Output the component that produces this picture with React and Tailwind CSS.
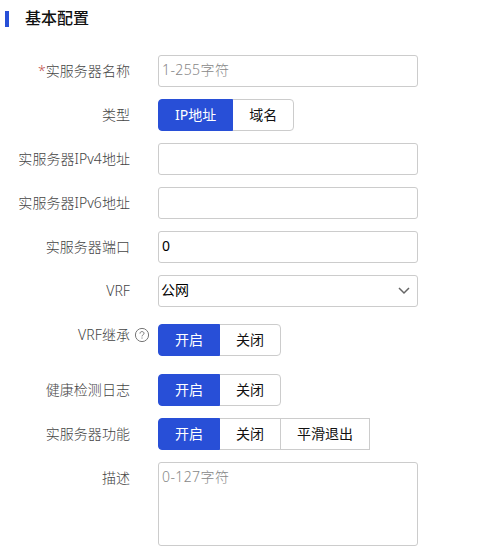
import React, { useState } from 'react';

const inputStyle = 'block w-[260px] h-8 rounded-[3px] border border-[#ccc] bg-white pl-[3px] pr-2 pb-[3px] text-sm text-black placeholder:text-[#888] placeholder:tracking-[0.4px] outline-none focus:border-[#284fd7]';

function Row({ label, required, help, className = 'mb-3', children }) {
  return (
    <div className={`flex items-start ${className}`}>
      <label className="w-[130px] h-8 shrink-0 text-right leading-8 tracking-[0.05px] text-[#444] whitespace-nowrap">
        {required && <span className="text-[#c0504d]">*</span>}
        {label}
      </label>
      <div className="w-7 h-8 shrink-0 flex items-center pl-1">{help && <HelpIcon />}</div>
      {children}
    </div>
  );
}

function HelpIcon() {
  return (
    <svg className="w-4 h-4 text-[#777]" viewBox="0 0 16 16" fill="none" stroke="currentColor">
      <circle cx="8" cy="8" r="6.6" />
      <path d="M6 6.6C6 5.3 6.8 4.6 8 4.6s2 .7 2 1.8c0 1.3-2 1.5-2 3" />
      <path d="M8 10.5v1.1" />
    </svg>
  );
}

function ButtonGroup({ options, squareEnd }) {
  const [active, setActive] = useState(options[0]);

  return (
    <div className={`flex ${squareEnd ? '' : '[&>button:last-child]:rounded-r'}`}>
      {options.map((option) => (
        <button
          key={option}
          type="button"
          onClick={() => setActive(option)}
          className={`h-8 border px-4 font-normal leading-[30px] whitespace-nowrap -ml-px first:ml-0 first:rounded-l ${
            active === option ? 'relative border-[#284fd7] bg-[#284fd7] text-white' : 'border-[#ccc] bg-white text-[#111]'
          }`}
        >
          {option}
        </button>
      ))}
    </div>
  );
}

function App() {
  const [port, setPort] = useState('0');

  return (
    <div className="min-h-screen bg-white pt-2 font-['Noto_Sans','Noto_Sans_CJK_SC',sans-serif] font-light text-sm">
      {/* Section title */}
      <div className="flex items-center h-[22px] pl-[5px] mb-[25px]">
        <span className="w-1 h-4 bg-[#284fd7]"></span>
        <h2 className="ml-4 pb-0.5 text-base leading-[20px] font-medium text-[#111]">基本配置</h2>
      </div>

      <form>
        <Row label="实服务器名称" required>
          <input className={inputStyle} placeholder="1-255字符" />
        </Row>
        <Row label="类型">
          <ButtonGroup options={['IP地址', '域名']} />
        </Row>
        <Row label="实服务器IPv4地址">
          <input className={inputStyle} />
        </Row>
        <Row label="实服务器IPv6地址">
          <input className={inputStyle} />
        </Row>
        <Row label="实服务器端口">
          <input className={`${inputStyle} font-normal`} value={port} onChange={(e) => setPort(e.target.value)} />
        </Row>
        <Row label="VRF">
          <div className={`${inputStyle} flex! items-center justify-between`}>
            <span className="-ml-px font-normal">公网</span>
            <svg className="w-3 h-3 mt-[3px] -mr-px text-[#666]" viewBox="0 0 12 12" fill="none" stroke="currentColor" strokeWidth="1.5">
              <path d="M1 3l5 5 5-5" />
            </svg>
          </div>
        </Row>
        <Row label="VRF继承" help className="mb-[18px]">
          <div className="pt-[5px]">
            <ButtonGroup options={['开启', '关闭']} />
          </div>
        </Row>
        <Row label="健康检测日志">
          <ButtonGroup options={['开启', '关闭']} />
        </Row>
        <Row label="实服务器功能">
          <ButtonGroup options={['开启', '关闭', '平滑退出']} squareEnd />
        </Row>
        <Row label="描述" className="">
          <textarea
            className="block w-[260px] h-[84px] resize-none rounded-[3px] border border-[#ccc] pl-[3px] pt-1 leading-5 outline-none placeholder:text-[#888] placeholder:tracking-[0.4px]"
            placeholder="0-127字符"
          />
        </Row>
      </form>
    </div>
  );
}

export default App;
